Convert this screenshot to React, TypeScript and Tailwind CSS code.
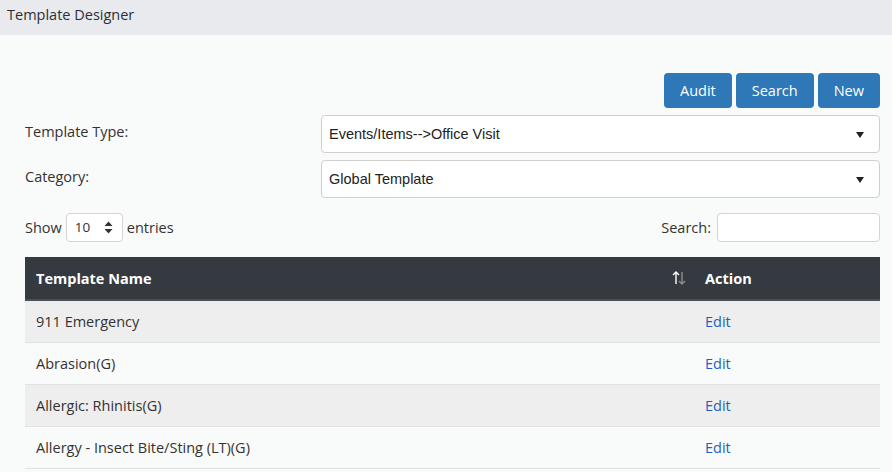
const rows = ['911 Emergency', 'Abrasion(G)', 'Allergic: Rhinitis(G)', 'Allergy - Insect Bite/Sting (LT)(G)'];

function Caret() {
  return (
    <svg width="10" height="8" viewBox="0 0 10 8" className="text-[#222]">
      <path d="M1 1h8L5 7z" fill="currentColor" />
    </svg>
  );
}

function Select({ value }: { value: string }) {
  return (
    <div className="flex h-[38px] flex-1 items-center justify-between rounded-[4px] border border-[#cfcfcf] bg-white pl-[7px] pr-[14px] pt-[2px] font-['Liberation_Sans',Arial,sans-serif] text-[14.5px] text-[#222]">
      <span>{value}</span>
      <Caret />
    </div>
  );
}

export default function App() {
  return (
    <div className="min-h-[472px] w-[892px] bg-[#f9fafa] font-['Open_Sans',sans-serif] text-[14.5px] text-[#333]">
      <div className="flex h-[35px] items-start bg-[#e8eaed] px-[7px] pt-[4px] text-[14.5px] text-[#2a2f36]">Template Designer</div>
      <div className="pl-[25px] pr-[12px] pt-[38px]">
        <div className="flex justify-end gap-[4px]">
          {['Audit', 'Search', 'New'].map((b) => (
            <button key={b} className="h-[35px] rounded-[4px] bg-[#2e78b8] px-[16px] text-[14.5px] text-white">{b}</button>
          ))}
        </div>
        <div className="mt-[7px] flex items-start">
          <div className="w-[296px] pt-[6px]">Template Type:</div>
          <Select value="Events/Items-->Office Visit" />
        </div>
        <div className="mt-[7px] flex items-start">
          <div className="w-[296px] pt-[6px]">Category:</div>
          <Select value="Global Template" />
        </div>
        <div className="mt-[15px] flex items-center justify-between">
          <div className="flex items-center gap-[4px]">
            <span>Show</span>
            <div className="flex h-[29px] w-[57px] items-center justify-between rounded-[4px] border border-[#d4d4d4] bg-white pl-[8px] pr-[9px] text-[13.5px]">
              <span>10</span>
              <svg width="9" height="13" viewBox="0 0 9 13">
                <path d="M4.5 0.5L8.5 5H0.5z M4.5 12.5L0.5 8H8.5z" fill="#333" />
              </svg>
            </div>
            <span>entries</span>
          </div>
          <div className="flex items-center gap-[6px]">
            <span>Search:</span>
            <div className="h-[29px] w-[163px] rounded-[4px] border border-[#d4d4d4] bg-white" />
          </div>
        </div>
        <table className="mt-[15px] w-full border-collapse">
          <thead>
            <tr className="h-[43px] border-b-2 border-[#4a5058] bg-[#353a41] text-left text-white">
              <th className="pl-[11px] pt-[2px] font-bold">
                <div className="flex items-center justify-between pr-[17px]">
                  <span>Template Name</span>
                  <svg width="16" height="16" viewBox="0 0 16 16" className="mt-[-3px]">
                    <path d="M5 2v12M2 5l3-3 3 3" stroke="#ffffff" strokeWidth="1.4" fill="none" />
                    <path d="M11 2v12M8 11l3 3 3-3" stroke="#8a8f96" strokeWidth="1.4" fill="none" />
                  </svg>
                </div>
              </th>
              <th className="w-[176px] pl-[1px] pt-[2px] font-bold">Action</th>
            </tr>
          </thead>
          <tbody>
            {rows.map((r, i) => (
              <tr key={r} className={`h-[42px] border-b border-[#dfe1e4] ${i % 2 === 0 ? 'bg-[#eeeeee]' : 'bg-[#f9fafa]'}`}>
                <td className="pl-[11px] pt-[1px]">{r}</td>
                <td className="pl-[1px] pt-[1px] text-[#1f5fbf]">Edit</td>
              </tr>
            ))}
          </tbody>
        </table>
      </div>
    </div>
  );
}
